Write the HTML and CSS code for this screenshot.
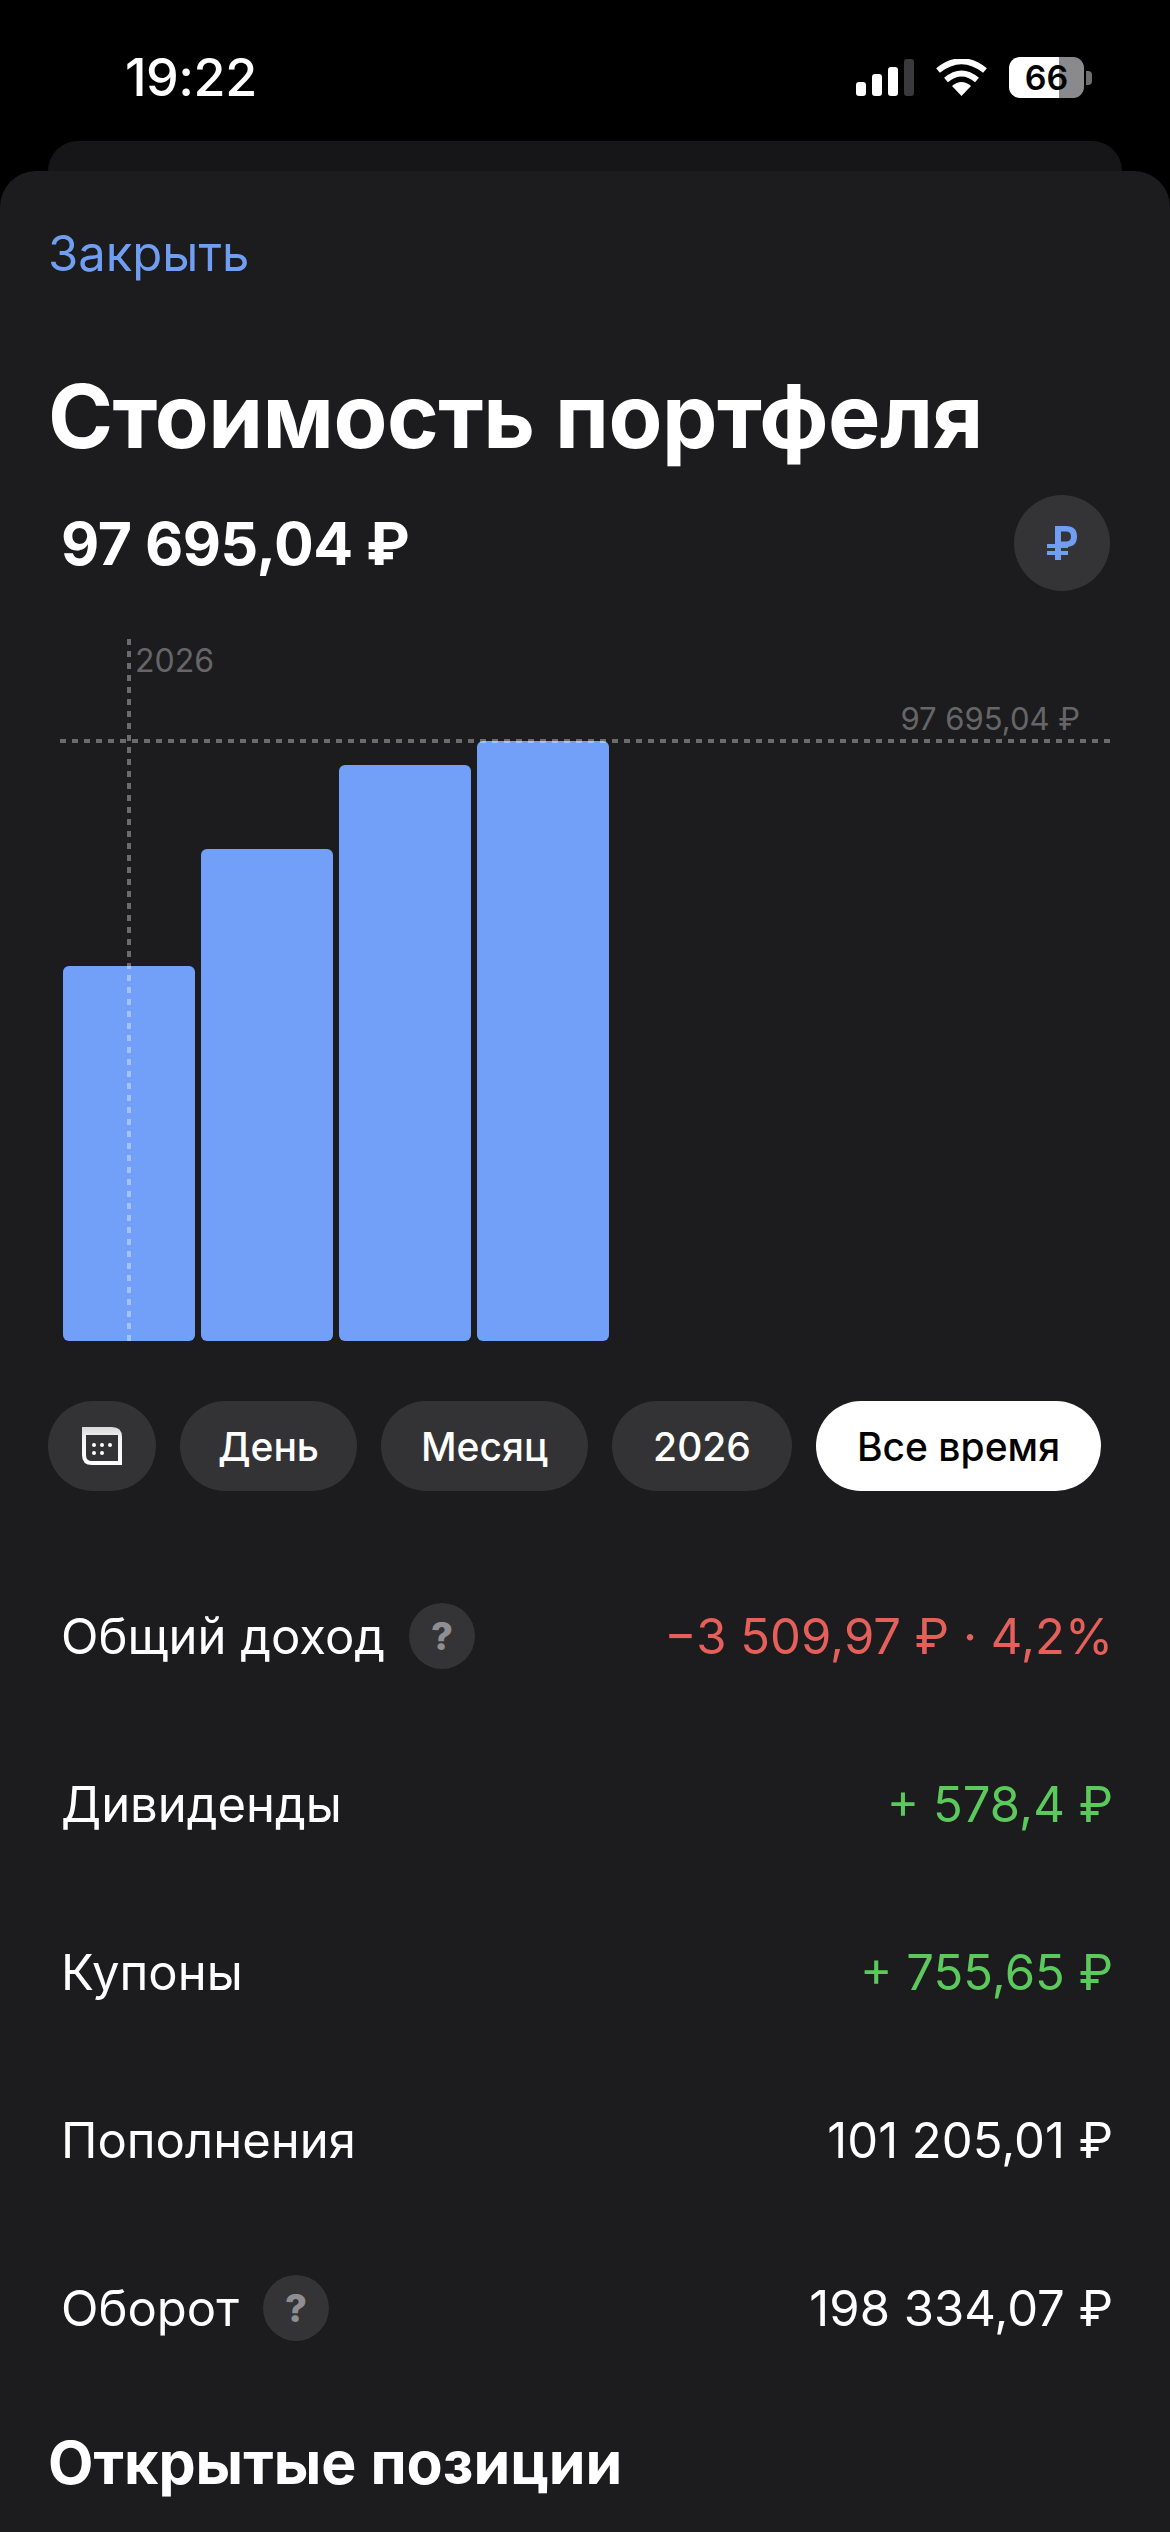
FILE: index.html
```html
<!DOCTYPE html>
<html lang="ru">
<head>
<meta charset="utf-8">
<title>Стоимость портфеля</title>
<link rel="stylesheet" href="styles.css">
</head>
<body>
<div class="screen">
  <header class="status">
    <span class="time">19:22</span>
    <div class="status-icons">
      <svg class="signal" width="58" height="38" viewBox="0 0 58 38">
        <rect x="0" y="23" width="10" height="14" rx="3" fill="#fff"/>
        <rect x="16" y="15" width="10" height="22" rx="3" fill="#fff"/>
        <rect x="32" y="8" width="10" height="29" rx="3" fill="#fff"/>
        <rect x="48" y="0" width="10" height="37" rx="3" fill="#3a3a3c"/>
      </svg>
      <svg class="wifi" width="51" height="38" viewBox="0 0 51 38">
        <path d="M25.500 37 L16 27 Q25.500 19 35 27 Z" fill="#fff"/>
        <path d="M10 21 Q25.500 8 41 21" fill="none" stroke="#fff" stroke-width="6"/>
        <path d="M2 11.500 Q25.500 -7 49 11.500" fill="none" stroke="#fff" stroke-width="6"/>
      </svg>
      <div class="battery">
        <div class="battery-body"><span class="battery-level">66</span></div>
        <span class="battery-nub"></span>
      </div>
    </div>
  </header>
  <div class="back-sheet"></div>
  <main class="sheet">
    <a class="close">Закрыть</a>
    <h1 class="title">Стоимость портфеля</h1>
    <div class="total-row">
      <span class="total">97 695,04 ₽</span>
      <span class="currency">
        <svg width="30" height="34" viewBox="0 0 30 34">
          <path d="M8 0H19Q30 0 30 10.500Q30 21 19 21H14V34H8ZM14 5.500V15.500H19Q24 15.500 24 10.500Q24 5.500 19 5.500Z" fill="#6f9ef2" fill-rule="evenodd"/>
          <rect x="0" y="18" width="21" height="4" fill="#6f9ef2"/>
          <rect x="0" y="25" width="21" height="4" fill="#6f9ef2"/>
        </svg>
      </span>
    </div>
    <section class="chart">
      <div class="bars">
        <div class="bar" style="height:375px"></div>
        <div class="bar" style="height:492px"></div>
        <div class="bar" style="height:576px"></div>
        <div class="bar" style="height:600px"></div>
      </div>
      <span class="guide-v"></span>
      <span class="guide-h"></span>
      <span class="label-year">2026</span>
      <span class="label-max">97 695,04 ₽</span>
    </section>
    <nav class="periods">
      <button class="pill pill-icon">
        <svg width="40" height="38" viewBox="0 0 40 38">
          <defs><linearGradient id="calGrad" x1="0" y1="0" x2="0" y2="1"><stop offset="0" stop-color="#d8d8d8"/><stop offset=".3" stop-color="#f4f4f4"/><stop offset="1" stop-color="#fff"/></linearGradient></defs>
          <path d="M0 0H30Q40 0 40 10V38H10Q0 38 0 28Z" fill="url(#calGrad)"/>
          <path d="M4 8H36V34H10Q4 34 4 28Z" fill="#333335"/>
          <circle cx="12" cy="18" r="2" fill="#fff"/><circle cx="20" cy="18" r="2" fill="#fff"/><circle cx="28" cy="18" r="2" fill="#fff"/>
          <circle cx="12" cy="26" r="2" fill="#fff"/><circle cx="20" cy="26" r="2" fill="#fff"/>
        </svg>
      </button>
      <button class="pill pill-day">День</button>
      <button class="pill pill-month">Месяц</button>
      <button class="pill pill-year">2026</button>
      <button class="pill pill-active">Все время</button>
    </nav>
    <dl class="stats">
      <div class="stat"><dt class="stat-label">Общий доход <span class="hint">?</span></dt><dd class="stat-value negative">−3 509,97 ₽ · 4,2%</dd></div>
      <div class="stat"><dt class="stat-label">Дивиденды</dt><dd class="stat-value positive">+ 578,4 ₽</dd></div>
      <div class="stat"><dt class="stat-label">Купоны</dt><dd class="stat-value positive">+ 755,65 ₽</dd></div>
      <div class="stat"><dt class="stat-label">Пополнения</dt><dd class="stat-value">101 205,01 ₽</dd></div>
      <div class="stat"><dt class="stat-label">Оборот <span class="hint">?</span></dt><dd class="stat-value">198 334,07 ₽</dd></div>
    </dl>
    <h2 class="subtitle">Открытые позиции</h2>
  </main>
</div>
</body>
</html>
```
FILE: styles.css
```css
* { box-sizing: border-box; }
html, body { margin: 0; padding: 0; background: #000; }
body { font-family: Inter, "Noto Sans", sans-serif; color: #fff; }
.screen { width: 1170px; height: 2532px; overflow: hidden; display: flex; flex-direction: column; }

.status { height: 141px; flex: none; display: flex; justify-content: space-between; padding: 52px 78px 0 125px; }
.time { font-size: 52px; font-weight: 500; line-height: 52px; letter-spacing: -0.5px; }
.status-icons { display: flex; align-items: flex-start; padding-top: 5px; }
.signal { margin-top: 2px; margin-right: 22px; }
.wifi { margin-top: 2px; margin-right: 22px; }
.battery { display: flex; align-items: center; }
.battery-body { width: 75px; height: 41px; border-radius: 11px; background: linear-gradient(90deg, #fff 0 50px, #8a8a8c 50px); display: flex; align-items: center; justify-content: center; }
.battery-level { color: #000; font-size: 34px; font-weight: 600; line-height: 41px; }
.battery-nub { width: 6px; height: 14px; margin-left: 2px; border-radius: 0 4px 4px 0; background: #6e6e70; }

.back-sheet { height: 30px; flex: none; margin: 0 48px; background: #161618; border-radius: 32px 32px 0 0; }
.sheet { flex: 1; background: #1c1c1e; border-radius: 36px 36px 0 0; padding: 0 60px 0 48px; }

.close { display: block; margin-top: 51px; color: #6f9ef2; font-size: 49px; line-height: 64px; }
.title { margin: 80px 0 0; font-size: 88px; font-weight: 700; line-height: 100px; letter-spacing: -0.5px; }
.total-row { display: flex; justify-content: space-between; align-items: center; height: 96px; margin-top: 29px; padding-left: 13px; }
.total { font-size: 59px; font-weight: 700; letter-spacing: -0.5px; }
.currency { width: 96px; height: 96px; border-radius: 50%; background: #343436; display: flex; align-items: center; justify-content: center; }

.chart { position: relative; height: 750px; }
.guide-v { position: absolute; left: 79px; top: 48px; bottom: 0; width: 4px; background: repeating-linear-gradient(180deg, rgba(255,255,255,.35) 0 6px, transparent 6px 12px); }
.guide-h { position: absolute; left: 12px; right: 0; top: 148px; height: 4px; background: repeating-linear-gradient(90deg, rgba(255,255,255,.35) 0 6px, transparent 6px 12px); }
.label-year { position: absolute; left: 87px; top: 50px; font-size: 32px; line-height: 40px; color: #666668; }
.label-max { position: absolute; right: 30px; top: 108px; font-size: 31px; line-height: 40px; color: #666668; }
.bars { position: absolute; left: 15px; bottom: 0; display: flex; align-items: flex-end; gap: 6px; }
.bar { width: 132px; background: #72a0f8; border-radius: 6px; }

.periods { display: flex; gap: 24px; margin-top: 60px; }
.pill { flex: none; height: 90px; padding: 0; border: 0; border-radius: 45px; background: #333335; color: #fff; font: 500 39px Inter, "Noto Sans", sans-serif; white-space: nowrap; display: flex; align-items: center; justify-content: center; }
.pill-icon { width: 108px; }
.pill-day { width: 177px; }
.pill-month { width: 207px; }
.pill-year { width: 180px; }
.pill-active { width: 285px; background: #fff; color: #000; }

.stats { margin: 61px -3px 0 0; padding-left: 13px; }
.stat { height: 168px; display: flex; justify-content: space-between; align-items: center; font-size: 49px; }
.stat-label { display: flex; align-items: center; gap: 24px; }
.stat-value { margin: 0; }
.hint { width: 66px; height: 66px; border-radius: 50%; background: #343436; color: #8e8e93; font-size: 38px; font-weight: 800; display: flex; align-items: center; justify-content: center; }
.negative { color: #e5605a; }
.positive { color: #5cc95c; }

.subtitle { margin: 36px 0 0; font-size: 59px; font-weight: 700; line-height: 70px; }
```
